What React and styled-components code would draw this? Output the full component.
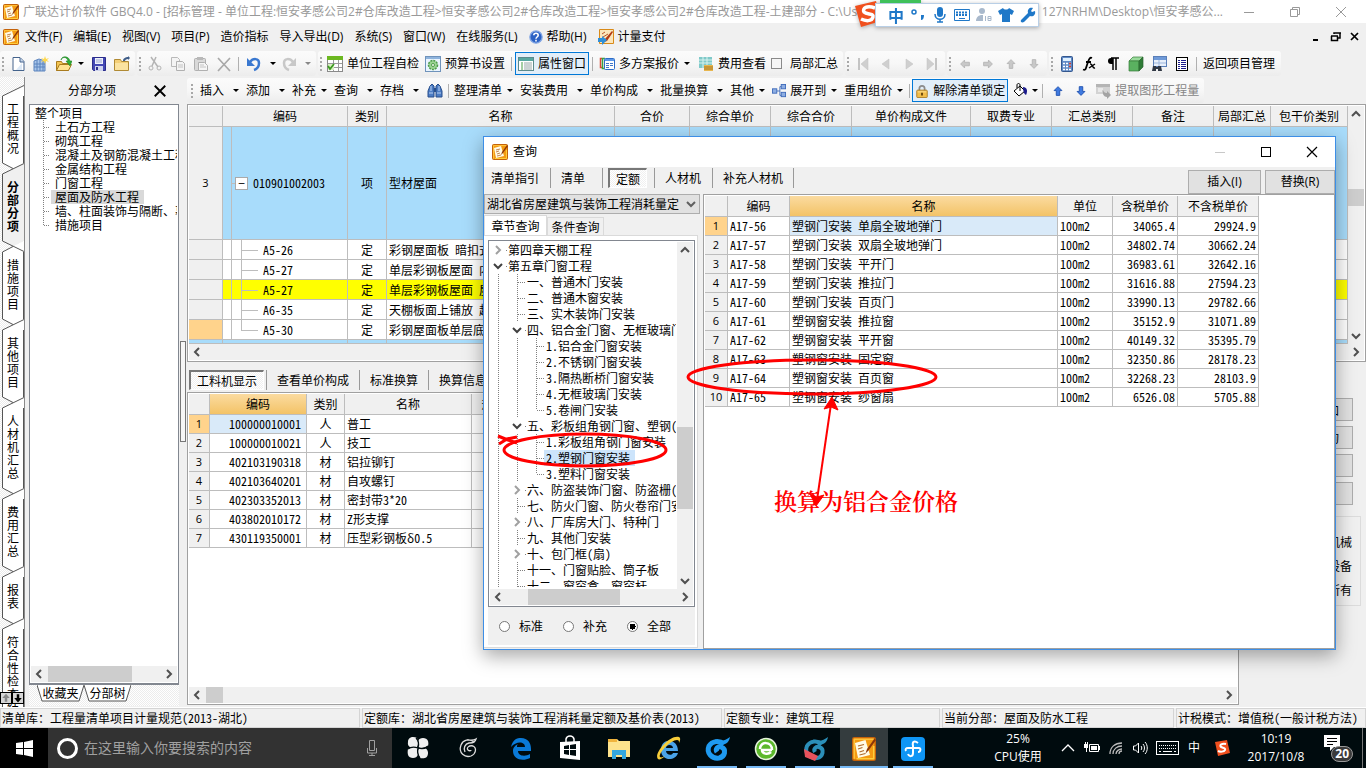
import React from 'react';
import styled, { createGlobalStyle, css } from 'styled-components';

const song = '"Noto Sans Mono CJK SC", "Noto Sans CJK SC", sans-serif';
const yahei = '"Open Sans", "Noto Sans CJK SC", sans-serif';
const line = '#bdbdbd';
const face = '#f0f0f0';

const GlobalStyle = createGlobalStyle`
    * { box-sizing: border-box; }
    body { margin: 0; background: ${face}; color: #000; font: 12px/16px ${song}; overflow: hidden; }
    button, input, select { font: inherit; color: inherit; margin: 0; padding: 0; border: 0; background: none; }
    svg { display: block; flex: none; }
    table { border-collapse: separate; border-spacing: 0; table-layout: fixed; }
`;

/* ---------- icons ---------- */

const Icon = ({ size = 16, h, box, children, ...rest }) => (
    <svg width={size} height={h || size} viewBox={box || '0 0 16 16'} fill="none" {...rest}>{children}</svg>
);

const AppIcon = ({ size = 16 }) => (
    <Icon size={size}>
        <rect x=".5" y=".5" width="15" height="15" rx="1" fill="#f39a12" stroke="#c4620a" />
        <path d="M1.500 14.500v-13h13" stroke="#ffc23a" />
        <path d="M2 4l7-2 3 10-8 2z" fill="#fffbe8" />
        <path d="M4 6l4-1M4 8l3-1M5 10l3-1M5 12l4-1" stroke="#b06a2c" strokeWidth=".8" />
        <path d="M15 1L10 8l-1 3 2-2 5-7z" fill="#8c3608" />
        <path d="M3 14.500h11.500V6" stroke="#ffce3a" />
    </Icon>
);

const NewIcon = () => (
    <Icon>
        <path d="M3 1.500h7l4 4v9h-11z" fill="#fff" stroke="#44638c" />
        <path d="M10 2v4h4" fill="#c7d8ee" stroke="#44638c" />
        <path d="M12 7v7H6z" fill="#dce8f6" />
    </Icon>
);

const BuildingIcon = () => (
    <Icon>
        <path d="M1 5l5-2 6 2v10H1z" fill="#a9c6ea" stroke="#5b83bd" />
        <path d="M4 4v11M7 4v11M10 5v10M1 8h11M1 11h11" stroke="#5b83bd" />
        <path d="M12 0l1 3 3-1-2 2 2 2-3-1-1 3-1-3-3 1 2-2-2-2 3 1z" fill="#ffd84a" />
    </Icon>
);

const OpenIcon = () => (
    <Icon>
        <path d="M.5 14.500v-9h5l1 2h6v7z" fill="#f3c451" stroke="#a97b1e" />
        <path d="M.5 14.500l3-6h12l-3 6z" fill="#ffe391" stroke="#a97b1e" />
        <path d="M5 4c2-4 6-3 7 1h-2l4 5 2-5h-2C13 0 6-1 5 4z" fill="#2fae35" stroke="#167a1c" strokeWidth=".5" />
    </Icon>
);

const SaveIcon = () => (
    <Icon>
        <path d="M1.500 1.500h13v13h-12l-1-1z" fill="#4448b4" stroke="#2b2d8c" />
        <rect x="4" y="2" width="8" height="6" fill="#eef1fb" />
        <path d="M5 4h6M5 6h6" stroke="#9aa4cf" />
        <rect x="4" y="10" width="8" height="5" fill="#cfd4ee" />
        <rect x="5" y="11" width="2" height="3" fill="#2b2d8c" />
    </Icon>
);

const FolderIcon = () => (
    <Icon>
        <path d="M.5 3.500h6l1 2h7v9H.5z" fill="#f4d078" stroke="#b08a34" />
        <path d="M1 7h13v7H1z" fill="#fbe3a0" />
        <path d="M9 5c0-3 3-4 5-4V0l2 2-2 2V3c-2 0-3 1-3 2z" fill="#3f5d87" />
    </Icon>
);

const CutIcon = () => (
    <Icon><path d="M4 1l7 10M9 1L5 10" stroke="#b4b4b4" strokeWidth="1.500" /><circle cx="4" cy="12" r="2" stroke="#b4b4b4" /><circle cx="12" cy="12" r="2" stroke="#b4b4b4" /></Icon>
);

const CopyIcon = () => (
    <Icon>
        <path d="M1.500 1.500h6l2 2v7h-8z" fill="#f4f4f4" stroke="#b9b9b9" />
        <path d="M6.500 5.500h6l2 2v7h-8z" fill="#f4f4f4" stroke="#b0b0b0" />
        <path d="M8 9h5M8 11h5" stroke="#c4c4c4" />
    </Icon>
);

const PasteIcon = () => (
    <Icon>
        <rect x="1.500" y="2.500" width="11" height="12" rx="1" fill="#d9d9d9" stroke="#b0b0b0" />
        <rect x="4" y="1" width="6" height="3" fill="#b9b9b9" />
        <path d="M5.500 6.500h6l3 3v5h-9z" fill="#f6f6f6" stroke="#b0b0b0" />
        <path d="M7 9h4M7 11h6" stroke="#c4c4c4" />
    </Icon>
);

const DeleteIcon = () => <Icon><path d="M2 2l12 13M14 2L2 15" stroke="#a9a9a9" strokeWidth="1.700" /></Icon>;

const UndoIcon = ({ color = '#3a78d0', flip }) => (
    <Icon>
        <g transform={flip ? 'translate(16 0) scale(-1 1)' : undefined}>
            <path d="M4 6c3-4 9-4 9 1 0 4-2 6-5 7" stroke={color} strokeWidth="2.500" />
            <path d="M1 2v8h8z" fill={color} />
        </g>
    </Icon>
);

const CheckTableIcon = () => (
    <Icon>
        <rect x=".5" y=".5" width="15" height="15" fill="#fff" stroke="#8a8a8a" />
        <path d="M0 0h16v4H0z" fill="#6cb821" />
        <path d="M1 7.500h14M1 11.500h14M6.500 4v11M11.500 4v11" stroke="#9a9a9a" />
        <path d="M1 8h6v6H1z" fill="#d7efc0" />
        <path d="M1 10l2 3 4-5" stroke="#3c9a20" strokeWidth="1.800" />
    </Icon>
);

const GearBoxIcon = () => (
    <Icon>
        <rect x=".5" y=".5" width="15" height="15" fill="#eaf4ff" stroke="#6f93bb" />
        <path d="M1 1h14v2H1z" fill="#8fb4dd" />
        <circle cx="8" cy="9" r="4.500" fill="#9ad493" stroke="#4d9b4b" strokeDasharray="2 1" strokeWidth="1.500" />
        <circle cx="8" cy="9" r="1.500" fill="#fff" stroke="#4d9b4b" />
    </Icon>
);

const ListWindowIcon = () => (
    <Icon>
        <rect x=".5" y="1.500" width="15" height="13" fill="#fff" stroke="#5c8a8c" />
        <path d="M1 2h14v3H1z" fill="#57a7a0" />
        <path d="M3 7h2M3 9h2M3 11h2M3 13h2" stroke="#4a9d47" />
        <path d="M6 7h8M6 9h8M6 11h8M6 13h8" stroke="#98a7a8" />
    </Icon>
);

const PlansIcon = () => (
    <Icon>
        <path d="M3 2.500H1.500v9H3" stroke="#d84a36" strokeWidth="1.500" />
        <path d="M6 2.500H3.500v10H6" stroke="#3aa144" strokeWidth="1.500" />
        <rect x="5.500" y="2.500" width="10" height="11" rx="1" fill="#fff" stroke="#2d6dc8" />
        <path d="M6 3h9v2H6z" fill="#5d98e8" />
        <path d="M7 7.500h3M11 7.500h3M7 9.500h3M11 9.500h3M7 11.500h3" stroke="#4077c8" />
    </Icon>
);

const FeeIcon = () => (
    <Icon>
        <rect x="1" y="1" width="13" height="11" fill="#7fc9c9" />
        <path d="M1 4h13M1 7h13M5 1v11M9 1v11" stroke="#d8f2ee" />
        <path d="M6 9h9v6H6z" fill="#e8b750" />
        <path d="M6 11h9M6 13h9" stroke="#a8761e" />
    </Icon>
);

const HelpIcon = () => (
    <Icon size={14}>
        <circle cx="8" cy="8" r="7" fill="#2c62c4" stroke="#7fa4e4" strokeWidth="1.500" />
        <path d="M5.500 6c0-3 5-3 5 0 0 2-2.500 2-2.500 4M8 11v2" stroke="#fff" strokeWidth="1.800" />
    </Icon>
);

const PayIcon = () => (
    <Icon>
        <path d="M1.500.5h14v14h-14z" fill="#fbe6bc" stroke="#d98a18" />
        <path d="M4 5l3-2M5 8l5-3" stroke="#b9562a" />
        <path d="M14 2l-7 8-1 3 3-1 6-9z" fill="#b23a14" />
        <path d="M0 9h4V7l5 4-5 5v-3H0z" fill="#2f8fd8" />
    </Icon>
);

const Triangle = ({ back, bar }) => (
    <Icon>
        <g transform={back ? 'translate(16 0) scale(-1 1)' : undefined}>
            <path d={bar ? 'M3 2l7 6-7 6z' : 'M5 3l7 5-7 5z'} fill="#cfcfcf" stroke="#c0c0c0" strokeWidth=".5" />
            {bar && <path d="M12 2v12" stroke="#c4c4c4" strokeWidth="2" />}
        </g>
    </Icon>
);

const Arrow = ({ turn = 0, fill = '#c8c8c8', stroke = '#b4b4b4' }) => (
    <Icon size={14}>
        <path d="M8 3l4.500 4.500h-2.500V13H6V7.500H3.500z" fill={fill} stroke={stroke} transform={`rotate(${turn} 8 8)`} />
    </Icon>
);

const CalcIcon = () => (
    <Icon>
        <rect x="2.500" y=".5" width="11" height="15" rx="1" fill="#5f8ac6" stroke="#34578e" />
        <rect x="4" y="2" width="8" height="3" fill="#dff0ff" />
        <path d="M4 7.500h8M4 10.500h8M4 13.500h8" stroke="#fff" strokeWidth="1.600" strokeDasharray="2 1" />
        <path d="M10 7.500h2M10 10.500h2" stroke="#d23c2c" strokeWidth="1.600" />
    </Icon>
);

const FxIcon = () => (
    <Icon>
        <path d="M10 2C8 1 7 3 6 6l-2 6c-.5 2-1.500 2-3 1.500M4 6h5" stroke="#000" strokeWidth="1.800" />
        <path d="M8 8c3-1 2 5 5 4M13 8l-6 4" stroke="#000" strokeWidth="1.500" />
    </Icon>
);

const ParaIcon = () => <Icon><path d="M8 2v12M11 2v12M6 2h8" stroke="#000" strokeWidth="1.500" /><path d="M8 2H6a3 3 0 000 6h2z" fill="#000" /></Icon>;

const CubeIcon = () => (
    <Icon>
        <path d="M1 5l4-4h10l-4 4z" fill="#9adb9c" stroke="#377d3b" strokeWidth=".7" />
        <path d="M1 5h10v10H1z" fill="#5ab160" stroke="#377d3b" strokeWidth=".7" />
        <path d="M11 5l4-4v10l-4 4z" fill="#2f7c37" stroke="#2b6430" strokeWidth=".7" />
    </Icon>
);

const FindTableIcon = () => (
    <Icon>
        <rect x="2.500" y=".5" width="13" height="10" fill="#e8f0fb" stroke="#5a7fb8" />
        <path d="M3 1h12v3H3z" fill="#6f9ad8" />
        <path d="M3 7h12M8 4v6" stroke="#9db6dc" />
        <path d="M1 15l1-5h3v5zM7 15v-5h3l1 5zM5 11h2v2H5z" fill="#303844" />
    </Icon>
);

const SheetIcon = () => (
    <Icon>
        <rect x="2.500" y="1.500" width="11" height="13" fill="#fff" stroke="#000" />
        <path d="M4 4.500h2M4 6.500h2M4 8.500h2M4 10.500h2M4 12.500h2M7 4.500h5M7 6.500h5M7 8.500h5M7 10.500h5M7 12.500h5" stroke="#1b1b8c" />
    </Icon>
);

const BinocularsIcon = () => (
    <Icon>
        <path d="M3 3l2-2 2 2v11H1V8zM9 3l2-2 2 2 2 5v6H9z" fill="#4c7cc4" stroke="#284f8c" />
        <path d="M7 5h2v4H7z" fill="#284f8c" />
        <path d="M2 10h4M10 10h4M4 3v5M12 3v5" stroke="#b8d0f2" />
    </Icon>
);

const ExpandIcon = () => (
    <Icon size={14}>
        <path d="M5 8h4M9 3v10M9 3h2M9 13h2" stroke="#3a67b8" />
        <rect x=".5" y="5.500" width="5" height="5" fill="#8eaee2" stroke="#3a67b8" />
        <rect x="10.500" y=".5" width="5" height="5" fill="#8eaee2" stroke="#3a67b8" />
        <rect x="10.500" y="9.500" width="5" height="5" fill="#8eaee2" stroke="#3a67b8" />
    </Icon>
);

const LockIcon = () => (
    <Icon size={14}>
        <path d="M5 8V5a3 3 0 016 0v3" stroke="#8c8c8c" strokeWidth="2" />
        <rect x="2" y="7" width="12" height="8.500" rx="1" fill="#f2bd4a" stroke="#a87820" />
        <path d="M3 9h10" stroke="#ffe39a" />
        <path d="M8 10v3" stroke="#5c3c08" strokeWidth="2" />
    </Icon>
);

const BucketIcon = () => (
    <Icon>
        <path d="M2 8l6-5 5 5-6 5z" fill="#fff" stroke="#000" />
        <path d="M8 8V2c0-2-3-2-3 0v3" stroke="#000" />
        <path d="M11 4c4 0 5 4 3 8-2-1-3-4-3-8z" fill="#1b1b8c" />
    </Icon>
);

const ExtractIcon = () => (
    <Icon>
        <path d="M1 1h14v10H1z" fill="#d3d3d3" />
        <path d="M1 1h14v3H1z" fill="#b5b5b5" />
        <path d="M3 6h5M3 8h4" stroke="#fff" />
        <path d="M8 7c1 3 3 3 4 3V8l4 4-4 4v-2c-3 0-5-3-4-7z" fill="#a4a4a4" />
    </Icon>
);

const Chevron = ({ turn = 0, color = '#505050' }) => (
    <Icon>
        <path d="M4 6l4 4 4-4" stroke={color} strokeWidth="2" transform={`rotate(${turn} 8 8)`} />
    </Icon>
);

/* dotted connectors drawn in front of each tree entry */
const Connector = ({ kind, w = 19, h = 16 }) => (
    <svg width={w} height={h} shapeRendering="crispEdges">
        <g stroke="#808080" strokeDasharray="1 1" strokeWidth="1">
            {(kind === 'pass' || kind === 'tee') && <path d={`M8.500 0V${h}`} />}
            {kind === 'end' && <path d={`M8.500 0V${h / 2}`} />}
            {(kind === 'tee' || kind === 'end') && <path d={`M9 ${h / 2 + 0.5}H${w - 2}`} />}
        </g>
        {kind === 'open' && <path d="M4 6l4 4 4-4" fill="none" stroke="#404040" strokeWidth="2" shapeRendering="auto" />}
        {kind === 'closed' && <path d="M6 4l4 4-4 4" fill="none" stroke="#a0a0a0" strokeWidth="2" shapeRendering="auto" />}
        {(kind === 'open' || kind === 'closed') && <rect x={w - 3} y="8" width="1" height="1" fill="#808080" />}
    </svg>
);

/* ---------- window frame ---------- */

const Screen = styled.div`
    display: flex;
    flex-direction: column;
    height: 100vh;
    position: relative;
    overflow: hidden;
`;

const TitleBar = styled.header`
    display: flex;
    align-items: center;
    height: 23px;
    padding: 0 17px 0 3px;
    background: #fff;
    color: #999;
    font-family: ${yahei};
    white-space: nowrap;

    h1 {
        flex: 1;
        margin: 0 0 0 4px;
        font-size: 12px;
        font-weight: 400;
    }
`;

const PathEnd = styled.span`
    margin-right: 18px;
`;

const FrameButtons = styled.div`
    display: flex;
    gap: ${({ $gap }) => $gap}px;

    button { display: flex; }
`;

const MenuBar = styled.nav`
    display: flex;
    align-items: center;
    height: 27px;
    padding: 0 3px;
    font-family: ${yahei};
`;

const MenuItem = styled.button`
    display: flex;
    align-items: center;
    gap: 4px;
    padding: 0 6px 0 5px;
    white-space: nowrap;
`;

const Spacer = styled.div`
    flex: 1;
`;

const ToolbarRow = styled.div`
    display: flex;
    gap: 2px;
    height: 27px;
    padding-top: 1px;
    font-family: ${yahei};
`;

const Group = styled.div`
    display: flex;
    align-items: center;
    height: 25px;
    padding-right: ${({ $end = 2 }) => $end}px;
    border-radius: 3px;
    background: linear-gradient(#fbfbfb, #f7f7f7 50%, #ececec);
`;

const Grip = styled.i`
    width: 2px;
    height: 14px;
    margin: 0 2px;
    background: repeating-linear-gradient(#a8a8a8 0 2px, transparent 2px 4px);
`;

const Sep = styled.i`
    width: 1px;
    height: 14px;
    margin: 0 ${({ $tight }) => $tight ? 2 : 3}px;
    background: #b0b0b0;
`;

const ToolIcon = styled.button`
    display: flex;
    justify-content: center;
    width: 23px;
`;

const ToolButton = styled.button`
    display: flex;
    align-items: center;
    gap: 4px;
    height: 23px;
    padding: 0 2px;
    border: 1px solid transparent;
    white-space: nowrap;
    color: ${({ disabled }) => disabled ? '#858585' : '#000'};
    ${({ $active }) => $active && css`
        background: #e2eef9;
        border-color: #0078d7;
    `}
`;

const Caret = styled.i`
    width: 6px;
    margin: 0 1px 0 ${({ $wide }) => $wide ? 5 : 1}px;
    border: 3px solid transparent;
    border-top-color: ${({ $dim }) => $dim ? '#888' : '#000'};
    border-bottom: 0;
`;

const CheckLabel = styled.label`
    display: flex;
    align-items: center;
    gap: 8px;
    margin: 0 3px 0 2px;
    white-space: nowrap;

    input {
        appearance: none;
        width: 11px;
        height: 11px;
        border: 1px solid #8a8a8a;
        background: #f6f6f6;
    }
`;

/* ---------- workspace ---------- */

const Workspace = styled.div`
    flex: 1;
    display: flex;
    min-height: 0;
`;

const SideTabs = styled.nav`
    display: flex;
    flex-direction: column;
    width: 25px;
    padding: 8px 0 0 2px;
    border-right: 1px solid #8a8a8a;
    background: repeating-conic-gradient(#fff 0 25%, #ececec 0 50%) 0 0 / 2px 2px;
    overflow: hidden;
`;

const SideTab = styled.button`
    flex: none;
    width: 22px;
    padding: 6px 0 9px;
    border: solid #555;
    border-width: 0 1px 0 1px;
    background: ${({ $active }) => $active ? face : '#fff'};
    border-right-color: ${({ $active }) => $active ? face : '#555'};
    font-weight: ${({ $active }) => $active ? 700 : 400};
    line-height: 13px;

    span {
        display: block;
        width: 12px;
        margin: 0 auto;
        word-break: break-all;
    }
`;

const Joint = ({ first, above, below }) => (
    <svg width="22" height="11">
        {!first && <path d="M0 0H22L11 5.500z" fill={above ? face : '#fff'} />}
        <path d="M0 11H22V0L11 5.500z" fill={below ? face : '#fff'} />
        <path d={first ? 'M.5 11L22 .5' : above ? 'M.5 0L22 10.500M.5 11L11 5.500' : 'M.5 11L22 .5M.5 0L11 5.500'} stroke="#555" fill="none" />
    </svg>
);

const SideArrows = styled.div`
    display: flex;
    position: absolute;
    left: 0;
    bottom: 64px;

    button {
        display: flex;
        width: 12px;
        height: 12px;
        border: 1px solid #000;
        background: #d6d6d6;
    }
`;

const Outline = styled.aside`
    display: flex;
    flex-direction: column;
    width: 150px;
    margin: 0 0 1px 4px;
`;

const OutlineHead = styled.div`
    display: flex;
    align-items: center;
    justify-content: space-between;
    height: 27px;
    padding: 0 8px 0 39px;
    font-family: ${yahei};
`;

const OutlineBox = styled.div`
    flex: 1;
    display: flex;
    flex-direction: column;
    min-height: 0;
    padding: 1px;
    border: 1px solid #828790;
    border-bottom-width: 2px;
    background: #fff;
`;

const OutlineTree = styled.ul`
    flex: 1;
    margin: 0;
    padding: 0 0 0 4px;
    list-style: none;
    overflow: hidden;
    line-height: 14px;
`;

const OutlineItem = styled.li`
    display: flex;
    height: 14px;
    white-space: nowrap;

    span {
        padding: 0 5px 0 4px;
        margin-left: -1px;
        background: ${({ $active }) => $active ? '#d9d9d9' : 'none'};
    }
`;

const BottomTabs = styled.div`
    display: flex;
    height: 21px;
    padding-left: 8px;
    background: repeating-conic-gradient(#fff 0 25%, #ececec 0 50%) 0 0 / 2px 2px;

    button {
        display: grid;
        width: 47px;
        height: 17px;
        justify-items: center;
    }

    svg, span {
        grid-area: 1 / 1;
    }
`;

const Splitter = styled.div`
    display: flex;
    align-items: flex-end;
    width: 8px;
    padding: 264px 0 265px 1px;

    i {
        width: 6px;
        height: 100%;
        border: 1px solid #777;
        background: #f6f6f6;
    }
`;

const Main = styled.main`
    flex: 1;
    display: flex;
    flex-direction: column;
    min-width: 0;
`;

const Box = styled.section`
    display: flex;
    flex-direction: column;
    min-width: 0;
    min-height: 0;
    padding: 1px;
    border: 1px solid #a0a0a0;
    background: #fff;
    ${({ $grow }) => $grow && css`flex: 1;`}
`;

const Row = styled.div`
    display: flex;
    min-height: 0;
    ${({ $grow }) => $grow && css`flex: 1;`}
`;

const TableArea = styled.div`
    flex: 1;
    min-height: 0;
    overflow: hidden;
`;

const Track = styled.div`
    display: flex;
    flex: none;
    flex-direction: ${({ $vertical }) => $vertical ? 'column' : 'row'};
    ${({ $vertical }) => $vertical ? 'width: 16px;' : 'height: 16px;'}
    background: ${face};

    button { display: flex; flex: none; }
`;

const Thumb = styled.i`
    flex: 0 0 ${({ $size }) => $size}px;
    background: #cdcdcd;
`;

const Gap = styled.i`
    flex: ${({ $size }) => $size ? `0 0 ${$size}px` : '1'};
`;

const ScrollBar = ({ vertical, before, thumb }) => (
    <Track $vertical={vertical}>
        <button aria-label="向前滚动"><Chevron turn={vertical ? 180 : 90} /></button>
        {before > 0 && <Gap $size={before} />}
        {thumb > 0 && <Thumb $size={thumb} />}
        <Gap />
        <button aria-label="向后滚动"><Chevron turn={vertical ? 0 : -90} /></button>
    </Track>
);

const Table = styled.table`
    width: ${({ $full }) => $full ? '100%' : '1px'};

    th, td {
        height: ${({ $row }) => $row}px;
        padding: 0 2px;
        border: solid ${line};
        border-width: 0 1px 1px 0;
        font-weight: 400;
        line-height: 16px;
        white-space: nowrap;
        overflow: hidden;
    }

    thead th {
        height: 21px;
        padding: 0;
        background: ${face};
    }

    tbody th {
        padding: 0;
        background: ${face};
        font-family: "Open Sans", sans-serif;
        font-size: 11px;
    }
`;

const Th = styled.th`
    && {
        ${({ $active }) => $active && css`background: linear-gradient(#fbdba0, #f3c367);`}
    }
`;

const RowHead = styled.th`
    && {
        ${({ $active }) => $active && css`background: #ffd38c;`}
    }
`;

const Td = styled.td`
    text-align: ${({ $align = 'left' }) => $align};
    background: ${({ $active }) => $active ? '#d9eaf9' : 'transparent'};
`;

const CodeCell = styled(Td)`
    && { padding-right: 5px; }
`;

const BillRow = styled.tr`
    background: ${({ $tone }) => $tone || '#fff'};

    && > * { height: ${({ $h = 20 }) => $h}px; }
    && > .code { padding: 0; }
`;

const Code = styled.div`
    display: flex;
    align-items: center;
    height: ${({ $h = 19 }) => $h}px;
`;

const Fold = styled.button`
    width: 13px;
    height: 13px;
    margin-right: 5px;
    border: 1px solid #aaa;
    background: #fff;
    line-height: 10px;
`;

const BillLines = ({ last }) => (
    <svg width="40" height="19" stroke={line} shapeRendering="crispEdges">
        <path d={`M8.500 0V20M18.500 0V${last ? 10 : 20}M18 10.500H35`} />
    </svg>
);

const TabStrip = styled.div`
    display: flex;
    align-items: center;
    ${({ $inset }) => $inset ? 'padding: 8px 0 2px 2px;' : 'height: 21px;'}
`;

const Tab = styled.button`
    height: 20px;
    padding: ${({ $active }) => $active ? '1px 6px 0' : '0 10px'};
    white-space: nowrap;
    ${({ $flush }) => $flush && css`padding: 0;`}
    ${({ $active }) => $active && css`
        border: solid #fff;
        border-width: 2px 1px 1px 2px;
        border-top-color: #777;
        border-left-color: #777;
        background: repeating-conic-gradient(#fff 0 25%, ${face} 0 50%) 0 0 / 2px 2px;
    `}
`;

const TabSep = styled.i`
    width: 1px;
    height: 20px;
    background: #999;
    margin-left: ${({ $left = 0 }) => $left}px;
    margin-right: ${({ $right = 0 }) => $right}px;
`;

const Actions = styled.div`
    display: flex;
    flex-direction: column;
    align-items: flex-end;
    gap: 5px;
    width: 127px;
    padding: 6px 5px 0 0;
`;

const ActionButton = styled.button`
    width: 52px;
    height: 23px;
    margin-right: 8px;
    border: 1px solid #adadad;
    background: #e1e1e1;
`;

const OptionGroup = styled.fieldset`
    display: flex;
    flex-direction: column;
    gap: 8px;
    width: 90px;
    height: 90px;
    margin: 6px 0 0;
    padding: 17px 8px 0;
    border: 1px solid #dcdcdc;

    label {
        display: flex;
        justify-content: flex-end;
        align-items: center;
        gap: 4px;
    }
`;

const StatusBar = styled.footer`
    display: grid;
    grid-template-columns: 360fr 360fr 216fr 232fr 190fr;
    gap: 2px;
    height: 21px;
    border-top: 1px solid #fff;
    background: ${face};

    span {
        padding: 1px 1px;
        border: 1px solid #d4d4d4;
        white-space: nowrap;
        overflow: hidden;
    }
`;

/* ---------- query dialog ---------- */

const Dialog = styled.div`
    position: absolute;
    top: 136px;
    left: 483px;
    right: 30px;
    height: 514px;
    display: flex;
    flex-direction: column;
    border: 1px solid #3d8ee6;
    background: ${face};
    box-shadow: 0 6px 18px rgba(0, 0, 0, 0.35);
`;

const DialogTitle = styled.div`
    display: flex;
    align-items: center;
    gap: 5px;
    height: 30px;
    padding: 0 15px 0 8px;
    background: #fff;
    font-family: ${yahei};

    h2 {
        flex: 1;
        margin: 0;
        font-size: 12px;
        font-weight: 400;
    }
`;

const DialogTools = styled.div`
    display: flex;
    height: 27px;
`;

const PushButton = styled.button`
    width: ${({ $w }) => $w}px;
    height: 24px;
    margin: 3px 0 0 4px;
    border: 1px solid #adadad;
    background: #e1e1e1;
    font-family: "Open Sans", ${song};
`;

const DialogBody = styled.div`
    flex: 1;
    display: flex;
    gap: 3px;
    min-height: 0;
`;

const QueryPane = styled.div`
    display: flex;
    flex-direction: column;
    width: 216px;
`;

const Combo = styled.div`
    display: grid;
    align-items: center;
    justify-items: end;
    height: 20px;
    border: 1px solid #adadad;
    background: #e1e1e1;

    select {
        grid-area: 1 / 1;
        appearance: none;
        width: 100%;
        padding: 0 20px 0 2px;
    }

    svg {
        grid-area: 1 / 1;
        pointer-events: none;
    }
`;

const PageTabs = styled.div`
    display: flex;
    align-items: flex-end;
    height: 21px;
`;

const PageTab = styled.button`
    width: ${({ $active }) => $active ? 63 : 57}px;
    height: ${({ $active }) => $active ? 20 : 18}px;
    border: 1px solid #dadada;
    border-bottom: 0;
    background: ${({ $active }) => $active ? '#fff' : face};
`;

const Page = styled.div`
    flex: 1;
    display: flex;
    flex-direction: column;
    min-height: 0;
    margin: 0 2px 1px 0;
    padding: 4px 2px 2px 4px;
    border: 1px solid #dadada;
    border-left: 0;
    background: #fff;
`;

const TreeBox = styled.div`
    flex: 1;
    display: flex;
    flex-direction: column;
    min-height: 0;
    padding: 1px;
    border: 1px solid #828790;
`;

const Tree = styled.ul`
    flex: 1;
    min-width: 0;
    margin: 0 1px 2px 0;
    padding: 0;
    list-style: none;
    overflow: hidden;
`;

const TreeItem = styled.li`
    display: flex;
    height: 16px;
    white-space: nowrap;

    span {
        margin-left: -3px;
        padding: 0 5px 0 2px;
        background: ${({ $active }) => $active ? '#cce4fb' : 'none'};
    }
`;

const Scope = styled.div`
    display: flex;
    gap: 20px;
    height: 38px;
    padding-left: 11px;
    background: ${face};

    label {
        display: flex;
        align-items: center;
        gap: 9px;
    }

    input {
        appearance: none;
        width: 11px;
        height: 11px;
        border: 1px solid #777;
        border-radius: 50%;
        background: #fff;
    }

    input:checked {
        background: radial-gradient(#000 0 3px, #fff 3px);
    }
`;

/* ---------- review marks ---------- */

const Marks = styled.svg`
    position: absolute;
    top: 350px;
    left: 490px;
    pointer-events: none;
`;

const Note = styled.p`
    position: absolute;
    top: 484px;
    left: 774px;
    margin: 0;
    color: #f00;
    font: 600 23px/34px "Noto Serif CJK SC", "Noto Sans CJK SC", sans-serif;
    white-space: nowrap;
`;

/* ---------- input method bar ---------- */

const ImeBar = styled.div`
    position: absolute;
    top: 0;
    left: 854px;
    display: flex;
    align-items: flex-start;
    filter: drop-shadow(0 1px 2px rgba(0, 0, 0, 0.3));
`;

const ImePanel = styled.div`
    display: flex;
    align-items: center;
    gap: 6px;
    height: 24px;
    margin: 3px 0 0 -7px;
    padding: 0 2px 0 12px;
    border: 1px solid #b9cfe6;
    background: #fff;
    color: #1f78c8;
    font: 700 16px/20px "Noto Sans CJK SC", sans-serif;
`;

const GreenTab = styled.i`
    position: absolute;
    top: 0;
    left: 26px;
    width: 41px;
    height: 3px;
    background: #3fc05a;
`;

/* ---------- taskbar ---------- */

const Taskbar = styled.footer`
    display: flex;
    align-items: stretch;
    height: 40px;
    background: #000b0e;
    color: #fff;
    font-family: ${yahei};
`;

const StartButton = styled.button`
    display: flex;
    align-items: center;
    justify-content: center;
    width: 48px;
    background: #000;
`;

const Search = styled.label`
    display: flex;
    align-items: center;
    gap: 5px;
    width: 344px;
    margin-right: 2px;
    padding: 0 12px 0 8px;
    background: #323232;

    input {
        flex: 1;
        min-width: 0;
        font-size: 14px;
    }

    input::placeholder {
        color: #a0a0a0;
        opacity: 1;
    }
`;

const TaskButton = styled.button`
    display: flex;
    align-items: center;
    justify-content: center;
    width: 48px;
    margin-right: ${({ $gap = 1 }) => $gap}px;
    background: ${({ $active }) => $active ? '#343c3e' : 'none'};
    ${({ $running, $active }) => $running && css`
        border: solid transparent;
        border-width: 2px 4px 0;
        background: linear-gradient(#76b9f5, #76b9f5) ${$active ? 'border-box' : ''} bottom / ${$active ? '100%' : '40px'} 2px no-repeat ${$active ? ', #343c3e' : ''};
    `}
`;

const Tray = styled.div`
    flex: 1;
    display: flex;
    align-items: center;
    justify-content: flex-end;
    border-right: 1px solid #777;
    margin-right: 3px;
`;

const TrayButton = styled.button`
    display: flex;
    justify-content: center;
    width: ${({ $w = 24 }) => $w}px;
`;

const TwoLines = styled.div`
    width: ${({ $w }) => $w}px;
    margin: 0 ${({ $right }) => $right}px 0 0;
    line-height: 18px;
    text-align: center;
    white-space: pre-line;
`;

const Notice = styled.div`
    display: grid;
    width: 30px;
    height: 28px;
    margin-right: 9px;

    svg { grid-area: 1 / 1; }

    b {
        grid-area: 1 / 1;
        align-self: end;
        justify-self: end;
        padding: 0 3px;
        border: 1px solid #999;
        border-radius: 9px;
        background: #3a3a3a;
        font-size: 12px;
        line-height: 14px;
        font-weight: 700;
    }
`;

/* ---------- data ---------- */

const sideTabs = ['工程概况', '分部分项', '措施项目', '其他项目', '人材机汇总', '费用汇总', '报表', '符合性检查结果'];

const outline = ['土石方工程', '砌筑工程', '混凝土及钢筋混凝土工程', '金属结构工程', '门窗工程', '屋面及防水工程', '墙、柱面装饰与隔断、幕墙工程', '措施项目'];

const billColumns = [
    ['', 34], ['编码', 125], ['类别', 39], ['名称'], ['合价', 75], ['综合单价', 81], ['综合合价', 81], ['单价构成文件', 119],
    ['取费专业', 81], ['汇总类别', 81], ['备注', 81], ['局部汇总', 57], ['包干价类别', 77],
];

const billRows = [
    ['A5-26', '彩钢屋面板 暗扣式'],
    ['A5-27', '单层彩钢板屋面 内板'],
    ['A5-27', '单层彩钢板屋面 屋面板', '#ffff00'],
    ['A6-35', '天棚板面上铺放 超细棉'],
    ['A5-30', '彩钢屋面板单层底板'],
];

const resources = [
    ['100000010001', '人', '普工'],
    ['100000010021', '人', '技工'],
    ['402103190318', '材', '铝拉铆钉'],
    ['402103640201', '材', '自攻螺钉'],
    ['402303352013', '材', '密封带3*20'],
    ['403802010172', '材', 'Z形支撑'],
    ['430119350001', '材', '压型彩钢板δ0.5'],
];

const chapters = [
    [['closed'], '第四章天棚工程'],
    [['open'], '第五章门窗工程'],
    [['pass', 'tee'], '一、普通木门安装'],
    [['pass', 'tee'], '二、普通木窗安装'],
    [['pass', 'tee'], '三、实木装饰门安装'],
    [['pass', 'open'], '四、铝合金门窗、无框玻璃门安装'],
    [['pass', 'pass', 'tee'], '1.铝合金门窗安装'],
    [['pass', 'pass', 'tee'], '2.不锈钢门窗安装'],
    [['pass', 'pass', 'tee'], '3.隔热断桥门窗安装'],
    [['pass', 'pass', 'tee'], '4.无框玻璃门安装'],
    [['pass', 'pass', 'end'], '5.卷闸门安装'],
    [['pass', 'open'], '五、彩板组角钢门窗、塑钢(料)门窗'],
    [['pass', 'pass', 'tee'], '1.彩板组角钢门窗安装'],
    [['pass', 'pass', 'tee'], '2.塑钢门窗安装', true],
    [['pass', 'pass', 'end'], '3.塑料门窗安装'],
    [['pass', 'closed'], '六、防盗装饰门窗、防盗栅(网)'],
    [['pass', 'tee'], '七、防火门窗、防火卷帘门安装'],
    [['pass', 'closed'], '八、厂库房大门、特种门'],
    [['pass', 'tee'], '九、其他门安装'],
    [['pass', 'closed'], '十、包门框(扇)'],
    [['pass', 'tee'], '十一、门窗贴脸、筒子板'],
    [['pass', 'tee'], '十二、窗帘盒、窗帘杆'],
];

const quotas = [
    ['A17-56', '塑钢门安装 单扇全玻地弹门', '34065.4', '29924.9'],
    ['A17-57', '塑钢门安装 双扇全玻地弹门', '34802.74', '30662.24'],
    ['A17-58', '塑钢门安装 平开门', '36983.61', '32642.16'],
    ['A17-59', '塑钢门安装 推拉门', '31616.88', '27594.23'],
    ['A17-60', '塑钢门安装 百页门', '33990.13', '29782.66'],
    ['A17-61', '塑钢窗安装 推拉窗', '35152.9', '31071.89'],
    ['A17-62', '塑钢窗安装 平开窗', '40149.32', '35395.79'],
    ['A17-63', '塑钢窗安装 固定窗', '32350.86', '28178.23'],
    ['A17-64', '塑钢窗安装 百页窗', '32268.23', '28103.9'],
    ['A17-65', '塑钢窗安装 纱窗扇', '6526.08', '5705.88'],
];

/* ---------- parts ---------- */

const DropButton = ({ children, wide, icon }) => (
    <ToolButton>{icon}{children}<Caret $wide={wide} /></ToolButton>
);

const MainToolbar = () => (
    <ToolbarRow>
        <Group>
            <Grip />
            <ToolIcon aria-label="新建"><NewIcon /></ToolIcon>
            <ToolIcon aria-label="新建工程"><BuildingIcon /></ToolIcon>
            <ToolIcon aria-label="打开"><OpenIcon /></ToolIcon>
            <Gap $size={2} /><Caret /><Gap $size={2} />
            <ToolIcon aria-label="保存"><SaveIcon /></ToolIcon>
            <ToolIcon aria-label="目录"><FolderIcon /></ToolIcon>
        </Group>
        <Group $end={4}>
            <Grip />
            <ToolIcon disabled aria-label="剪切"><CutIcon /></ToolIcon>
            <ToolIcon disabled aria-label="复制"><CopyIcon /></ToolIcon>
            <ToolIcon disabled aria-label="粘贴"><PasteIcon /></ToolIcon>
            <ToolIcon disabled aria-label="删除"><DeleteIcon /></ToolIcon>
            <Sep />
            <ToolIcon aria-label="撤销"><UndoIcon /></ToolIcon>
            <Caret $wide />
            <ToolIcon disabled aria-label="恢复"><UndoIcon color="#c8c8c8" flip /></ToolIcon>
            <Caret $wide $dim />
        </Group>
        <Group>
            <Grip />
            <ToolButton><CheckTableIcon />单位工程自检</ToolButton>
            <ToolButton><GearBoxIcon />预算书设置</ToolButton>
            <Sep />
            <ToolButton $active><ListWindowIcon />属性窗口</ToolButton>
            <Sep />
            <DropButton icon={<PlansIcon />}>多方案报价</DropButton>
            <Gap $size={1} />
            <ToolButton><FeeIcon />费用查看</ToolButton>
            <CheckLabel><input type="checkbox" />局部汇总</CheckLabel>
        </Group>
        <Group $end={2}>
            <Grip />
            <ToolIcon disabled aria-label="第一个"><Triangle back bar /></ToolIcon>
            <ToolIcon disabled aria-label="上一个"><Triangle back /></ToolIcon>
            <ToolIcon disabled aria-label="下一个"><Triangle /></ToolIcon>
            <ToolIcon disabled aria-label="最后一个"><Triangle bar /></ToolIcon>
        </Group>
        <Group>
            <Grip />
            <ToolIcon disabled aria-label="左移"><Arrow turn={-90} /></ToolIcon>
            <ToolIcon disabled aria-label="右移"><Arrow turn={90} /></ToolIcon>
            <ToolIcon disabled aria-label="上移"><Arrow /></ToolIcon>
            <ToolIcon disabled aria-label="下移"><Arrow turn={180} /></ToolIcon>
        </Group>
        <Group $end={3}>
            <Grip />
            <ToolIcon aria-label="计算器"><CalcIcon /></ToolIcon>
            <ToolIcon aria-label="函数"><FxIcon /></ToolIcon>
            <ToolIcon aria-label="段落"><ParaIcon /></ToolIcon>
            <ToolIcon aria-label="图形"><CubeIcon /></ToolIcon>
            <ToolIcon aria-label="查找表"><FindTableIcon /></ToolIcon>
            <ToolIcon aria-label="清单"><SheetIcon /></ToolIcon>
            <Sep />
            <ToolButton>返回项目管理</ToolButton>
        </Group>
    </ToolbarRow>
);

const BillToolbar = () => (
    <ToolbarRow>
        <Group>
            <Gap $size={2} />
            <Grip />
            <Gap $size={2} />
            <DropButton wide>插入</DropButton>
            <DropButton wide>添加</DropButton>
            <DropButton>补充</DropButton>
            <DropButton wide>查询</DropButton>
            <DropButton wide>存档</DropButton>
            <ToolIcon aria-label="查找"><BinocularsIcon /></ToolIcon>
            <Sep $tight />
            <DropButton>整理清单</DropButton>
            <DropButton wide>安装费用</DropButton>
            <DropButton wide>单价构成</DropButton>
            <DropButton wide>批量换算</DropButton>
            <DropButton>其他</DropButton>
            <DropButton icon={<ExpandIcon />}>展开到</DropButton>
            <DropButton>重用组价</DropButton>
            <Sep $tight />
            <ToolButton $active><LockIcon />解除清单锁定</ToolButton>
            <ToolIcon aria-label="填充颜色"><BucketIcon /></ToolIcon>
            <Caret />
            <Sep />
            <ToolIcon aria-label="上移"><Arrow fill="#3f7ae0" stroke="#1d4fae" /></ToolIcon>
            <ToolIcon aria-label="下移"><Arrow turn={180} fill="#3f7ae0" stroke="#1d4fae" /></ToolIcon>
            <ToolButton disabled><ExtractIcon />提取图形工程量</ToolButton>
        </Group>
    </ToolbarRow>
);

const BillTable = () => (
    <Table $full $row={20}>
        <colgroup>
            {billColumns.map(([name, width]) => <col key={name} style={{ width }} />)}
        </colgroup>
        <thead>
            <tr>{billColumns.map(([name]) => <th key={name}>{name}</th>)}</tr>
        </thead>
        <tbody>
            <BillRow $h={113} $tone="#a8dcfb">
                <RowHead>3</RowHead>
                <Td className="code">
                    <Code $h={112}>
                        <svg width="9" height="112" stroke={line}><path d="M8.500 0V112" /></svg>
                        <svg width="3" height="1" stroke={line}><path d="M0 .5H3" /></svg>
                        <Fold aria-label="折叠">−</Fold>010901002003
                    </Code>
                </Td>
                <Td $align="center">项</Td>
                <Td>型材屋面</Td>
                {billColumns.slice(4).map(([name]) => <Td key={name} />)}
            </BillRow>
            {billRows.map(([code, name, tone], i) => (
                <BillRow key={i} $tone={tone}>
                    <RowHead $active={i === 4} />
                    <Td className="code"><Code><BillLines last={i === 4} />{code}</Code></Td>
                    <Td $align="center">定</Td>
                    <Td>{name}</Td>
                    {billColumns.slice(4).map(([col]) => <Td key={col} />)}
                </BillRow>
            ))}
            <BillRow $h={4} $tone="#a8dcfb">
                {billColumns.map(([name]) => <Td key={name} />)}
            </BillRow>
        </tbody>
    </Table>
);

const ResourceTable = () => (
    <Table $row={19}>
        <colgroup>
            {[21, 97, 38, 127, 80].map((width) => <col key={width} style={{ width }} />)}
        </colgroup>
        <thead>
            <tr><th /><Th $active>编码</Th><th>类别</th><th>名称</th><th>规格及型号</th></tr>
        </thead>
        <tbody>
            {resources.map(([code, kind, name], i) => (
                <tr key={code}>
                    <RowHead $active={i === 0}>{i + 1}</RowHead>
                    <CodeCell $align="right" $active={i === 0}>{code}</CodeCell>
                    <Td $align="center">{kind}</Td>
                    <Td>{name}</Td>
                    <Td />
                </tr>
            ))}
        </tbody>
    </Table>
);

const QuotaTable = () => (
    <Table $row={19}>
        <colgroup>
            {[23, 62, 268, 55, 65, 81].map((width) => <col key={width} style={{ width }} />)}
        </colgroup>
        <thead>
            <tr><th /><th>编码</th><Th $active>名称</Th><th>单位</th><th>含税单价</th><th>不含税单价</th></tr>
        </thead>
        <tbody>
            {quotas.map(([code, name, taxed, untaxed], i) => (
                <tr key={code}>
                    <RowHead $active={i === 0}>{i + 1}</RowHead>
                    <Td>{code}</Td>
                    <Td $active={i === 0}>{name}</Td>
                    <Td>100m2</Td>
                    <Td $align="right">{taxed}</Td>
                    <Td $align="right">{untaxed}</Td>
                </tr>
            ))}
        </tbody>
    </Table>
);

const QueryDialog = () => (
    <Dialog role="dialog" aria-label="查询">
        <DialogTitle>
            <AppIcon />
            <h2>查询</h2>
            <FrameButtons $gap={30}>
                <button aria-label="最小化"><Icon><path d="M3 8.500h10" stroke="#c8c8c8" /></Icon></button>
                <button aria-label="最大化"><Icon><rect x="3.500" y="3.500" width="9" height="9" stroke="#000" /></Icon></button>
                <button aria-label="关闭"><Icon><path d="M3 3l10 10M13 3L3 13" stroke="#000" strokeWidth="1.200" /></Icon></button>
            </FrameButtons>
        </DialogTitle>
        <DialogTools>
            <TabStrip>
                <Gap $size={7} />
                <Tab $flush>清单指引</Tab>
                <TabSep $left={11} />
                <Tab>清单</Tab>
                <TabSep $left={7} $right={5} />
                <Tab $active>定额</Tab>
                <TabSep $left={7} />
                <Tab>人材机</Tab>
                <TabSep $left={1} />
                <Tab>补充人材机</Tab>
                <TabSep />
            </TabStrip>
            <Spacer />
            <PushButton $w={73}>插入(I)</PushButton>
            <PushButton $w={70}>替换(R)</PushButton>
        </DialogTools>
        <DialogBody>
            <QueryPane>
                <Combo>
                    <select aria-label="定额库"><option>湖北省房屋建筑与装饰工程消耗量定额及基价表(2013)</option></select>
                    <Chevron color="#606060" />
                </Combo>
                <PageTabs>
                    <PageTab $active>章节查询</PageTab>
                    <PageTab>条件查询</PageTab>
                </PageTabs>
                <Page>
                    <TreeBox>
                        <Row $grow>
                            <Tree>
                                {chapters.map(([kinds, text, active]) => (
                                    <TreeItem key={text} $active={active}>
                                        {kinds.map((kind, i) => <Connector key={i} kind={kind} />)}
                                        <span>{text}</span>
                                    </TreeItem>
                                ))}
                            </Tree>
                            <ScrollBar vertical before={169} thumb={82} />
                        </Row>
                        <ScrollBar before={22} thumb={92} />
                    </TreeBox>
                    <Scope>
                        <label><input type="radio" name="scope" />标准</label>
                        <label><input type="radio" name="scope" />补充</label>
                        <label><input type="radio" name="scope" defaultChecked />全部</label>
                    </Scope>
                </Page>
            </QueryPane>
            <Box $grow><QuotaTable /></Box>
        </DialogBody>
    </Dialog>
);

const Swirl = ({ color, width = 4 }) => (
    <>
        <path d="M21 9C16 5 9 6 6 11c-3 7 3 13 10 12 6-1 8-9 2-11-3-1-6 2-4 5" stroke={color} strokeWidth={width} />
        <path d="M12 4c5 3 10 2 15-2-1 6-5 8-10 8z" fill={color} />
    </>
);

const TaskIcon = ({ children }) => <Icon size={28} box="0 0 28 28">{children}</Icon>;

const TaskbarRow = () => (
    <Taskbar>
        <StartButton aria-label="开始">
            <Icon size={17} box="0 0 17 17"><path d="M0 3l7-1v6H0zM8 2l9-2v8H8zM0 9h7v6l-7-1zM8 9h9v8l-9-2z" fill="#fff" /></Icon>
        </StartButton>
        <Search>
            <Icon size={23} box="0 0 23 23"><circle cx="11.500" cy="11.500" r="9" stroke="#fff" strokeWidth="3" /></Icon>
            <input placeholder="在这里输入你要搜索的内容" aria-label="搜索" />
            <Icon><path d="M5.500 .5h5v10h-5zM3.500 8v5h9V8M8 13v3M5 15.500h6" stroke="#a0a0a0" /></Icon>
        </Search>
        <TaskButton aria-label="应用">
            <TaskIcon>
                <g fill="#f0f0f0">
                    <path d="M13 13C8 15 3 13 4 8c0-5 5-6 9-4 1 3 1 6 0 9z" />
                    <path d="M14 13c-1-5 0-9 5-9s6 4 5 8c-3 2-7 2-10 1z" />
                    <path d="M15 14c5-1 9 0 9 5s-4 6-8 5c-2-3-2-7-1-10z" />
                    <path d="M14 14c1 5 0 10-5 10s-6-4-5-9c3-2 7-2 10-1z" />
                </g>
                <path d="M4 15c4-3 7-2 10-1s7 1 10-2M16 24c-3-4-3-7-2-10s1-7-2-10" stroke="#000b0e" strokeWidth="1.200" />
            </TaskIcon>
        </TaskButton>
        <TaskButton $gap={6} aria-label="广联达">
            <TaskIcon>
                <path d="M21 8c-5-4-11-2-13 3-3 8 4 13 10 11 5-2 6-8 2-10-4-1-7 2-5 4 1 1 3 1 3 0M12 18c-2-4 0-8 4-9 5 0 6-1 7-4-3 2-6 1-9 1" stroke="#ddd" strokeWidth="1.300" />
            </TaskIcon>
        </TaskButton>
        <TaskButton aria-label="Edge">
            <TaskIcon><path d="M4 13C6 5 10 4 14 4c7 0 10 5 10 11v2H11c0 5 7 6 12 3v4c-8 4-17 1-17-7 0-4 3-6 5-7-1 1-1 2-1 3h8c0-6-9-6-14 0z" fill="#0a7ad8" /></TaskIcon>
        </TaskButton>
        <TaskButton aria-label="商店">
            <TaskIcon>
                <path d="M10 9V5c1-4 7-4 8 0v3" stroke="#fff" strokeWidth="1.500" />
                <path d="M4 8l20-1v19l-20-2z" fill="#fff" />
                <path d="M8 12l5-1v4H8zM14 11l6-1v5h-6zM8 16h5v5l-5-1zM14 16h6v6l-6-1z" fill="#000b0e" />
            </TaskIcon>
        </TaskButton>
        <TaskButton aria-label="文件资源管理器">
            <TaskIcon>
                <path d="M3 5h9l2 2h11v16H3z" fill="#fde38c" /><path d="M3 5h9v3H3z" fill="#f0b43c" />
                <path d="M7 16h14v9h-4v-4h-6v4H7z" fill="#34a8e0" />
            </TaskIcon>
        </TaskButton>
        <TaskButton aria-label="Internet Explorer">
            <TaskIcon>
                <path d="M7 16c0-13 17-12 17 1H12c0 4 6 5 7 2h5c-3 9-17 8-17-3zm5-2h7c0-4-7-4-7 0z" fill="#4aa3e8" />
                <path d="M4 25C-1 20 16 0 25 3c2 1 1 4 0 6 0-2 0-3-2-3C16 6 4 20 6 23c1 1 3 0 5-1-3 3-6 4-7 3z" fill="#f7ce3a" />
            </TaskIcon>
        </TaskButton>
        <TaskButton $running aria-label="广联达云"><TaskIcon><Swirl color="#1e9af0" width={5} /></TaskIcon></TaskButton>
        <TaskButton $running aria-label="浏览器">
            <TaskIcon>
                <circle cx="14" cy="14" r="10.500" fill="#5cb82c" stroke="#e6f4dc" strokeWidth="1.500" />
                <path d="M20 15H10c0 4 6 5 9 2M8 14c0-8 12-8 12 1" stroke="#fff" strokeWidth="2.500" />
            </TaskIcon>
        </TaskButton>
        <TaskButton $running aria-label="广联达工具">
            <TaskIcon><Swirl color="#2b8fb8" /><path d="M3 14l14 7-3 5-10-4z" fill="#e8525c" /></TaskIcon>
        </TaskButton>
        <TaskButton $running $active aria-label="GBQ4.0"><AppIcon size={24} /></TaskButton>
        <TaskButton $running aria-label="组价">
            <TaskIcon>
                <rect x="2" y="2" width="24" height="24" rx="4" fill="#0f96f5" />
                <path d="M19 8c-4-3-6-1-5 3v7c0 4-4 4-5 1M7 16c-1-2 0-3 2-3h11c2 0 2 4-1 4" stroke="#fff" strokeWidth="2" />
            </TaskIcon>
        </TaskButton>
        <Tray>
            <TwoLines $w={50} $right={13}>{'25%\nCPU使用'}</TwoLines>
            <TrayButton aria-label="显示隐藏的图标"><Icon><path d="M2 11l6-6 6 6" stroke="#fff" strokeWidth="1.300" /></Icon></TrayButton>
            <TrayButton aria-label="电源"><Icon><path d="M5.500 4.500h9v7h-9z" stroke="#fff" /><path d="M7 6h6v4H7zM15 6h1v4h-1zM0 4h4v4H0zM1 2h1v2H1zM3 2h1v2H3zM2 8h1v4H2z" fill="#fff" /></Icon></TrayButton>
            <TrayButton aria-label="网络"><Icon><path d="M2 14C2 7 7 3 14 3M5 14c0-5 4-8 9-8M8 14c0-3 3-5 6-5M11 14c0-2 1-3 3-3" stroke="#bbb" strokeWidth="1.300" /></Icon></TrayButton>
            <TrayButton aria-label="音量"><Icon><path d="M1.500 6h2l3-3v10l-3-3h-2zM9 6c1 1 1 3 0 4M11 4c2 2 2 6 0 8M13 2c3 3 3 9 0 12" stroke="#fff" /></Icon></TrayButton>
            <TrayButton $w={30} aria-label="键盘"><Icon size={23} h={14} box="0 0 23 14"><rect x=".5" y=".5" width="22" height="13" stroke="#fff" /><path d="M3 4.500h17M3 7.500h17" stroke="#fff" strokeDasharray="1 1" /><path d="M3 10.500h2M7 10.500h9M18 10.500h2" stroke="#fff" /></Icon></TrayButton>
            <TrayButton>中</TrayButton>
            <TrayButton $w={32} aria-label="输入法"><Icon><path d="M1 2l12-2 3 13-12 3z" fill="#f0501e" /><path d="M12 4c-4-1-7 1-5 3 2 1 5 1 4 3s-5 2-7 1" stroke="#fff" strokeWidth="2" /></Icon></TrayButton>
            <TwoLines $w={76} $right={9}>{'10:19\n2017/10/8'}</TwoLines>
            <Notice>
                <Icon size={18} box="0 0 18 18"><path d="M1 1h16v12h-6l-4 4v-4H1z" fill="#fff" /><path d="M4 4.500h10M4 7.500h10M4 10.500h6" stroke="#000" /></Icon>
                <b>20</b>
            </Notice>
        </Tray>
    </Taskbar>
);

const Ime = () => (
    <ImeBar>
        <GreenTab />
        <Icon size={28} box="0 0 28 28">
            <path d="M1 6L22 1l5 20-20 6z" fill="#f0501e" />
            <path d="M21 8C13 5 8 8 10 12c3 3 10 1 9 5-1 5-8 4-12 2" stroke="#fff" strokeWidth="3.500" />
        </Icon>
        <ImePanel>
            <span>中</span>
            <Icon><circle cx="4" cy="5" r="2" stroke="#1f78c8" strokeWidth="1.500" /><path d="M11 8h3c0 3-1 5-3 5z" fill="#1f78c8" /></Icon>
            <Icon><rect x="5" y="0" width="6" height="10" rx="3" fill="#1f78c8" /><path d="M3 7c0 7 10 7 10 0M8 12v3M5 15h6" stroke="#1f78c8" strokeWidth="1.500" /></Icon>
            <Icon><path d="M.5 2.500h15v11H.5z" stroke="#1f78c8" /><path d="M2 5.500h12M2 8h12" stroke="#1f78c8" strokeWidth="2" strokeDasharray="2 1" /><path d="M5 11.500h6" stroke="#1f78c8" /></Icon>
            <Icon><circle cx="6" cy="4" r="3" fill="#a9b9cc" /><path d="M0 14c0-8 12-8 12 0z" fill="#a9b9cc" /><path d="M7 8h9v7H7z" fill="#fff" /><path d="M9.500 9v5M12 9.500h3v4h-3zM12 11.500h3" stroke="#a9b9cc" /></Icon>
            <Icon><path d="M0 4l5-3c1 2 5 2 6 0l5 3-2 4-2-1v8H4V7L2 8z" fill="#1f78c8" /></Icon>
            <Icon><path d="M1 13l7-7c-1-4 2-6 5-5l-2 3 1 1 3-1c1 4-2 6-5 5l-6 6c-2 1-4 0-3-2z" fill="#1f78c8" /></Icon>
        </ImePanel>
    </ImeBar>
);

const App = () => (
    <>
        <GlobalStyle />
        <Screen>
            <TitleBar>
                <AppIcon />
                <h1>广联达计价软件 GBQ4.0 - [招标管理 - 单位工程:恒安孝感公司2#仓库改造工程&gt;恒安孝感公司2#仓库改造工程&gt;恒安孝感公司2#仓库改造工程-土建部分 - C:\Users</h1>
                <PathEnd>127NRHM\Desktop\恒安孝感公...</PathEnd>
                <FrameButtons $gap={30}>
                    <button aria-label="最小化"><Icon><path d="M3 8.500h10" stroke="#999" /></Icon></button>
                    <button aria-label="还原"><Icon><path d="M3.500 5.500h7v7h-7zM5.500 5V3.500h7v7H11" stroke="#999" /></Icon></button>
                    <button aria-label="关闭"><Icon><path d="M3 3l10 10M13 3L3 13" stroke="#999" /></Icon></button>
                </FrameButtons>
            </TitleBar>
            <MenuBar>
                <AppIcon />
                <Gap $size={1} />
                {['文件(F)', '编辑(E)', '视图(V)', '项目(P)', '造价指标', '导入导出(D)', '系统(S)', '窗口(W)', '在线服务(L)'].map((name) => (
                    <MenuItem key={name}>{name}</MenuItem>
                ))}
                <MenuItem><HelpIcon />帮助(H)</MenuItem>
                <MenuItem><PayIcon />计量支付</MenuItem>
                <Spacer />
                <FrameButtons $gap={3}>
                    <button aria-label="最小化子窗口"><Icon><path d="M4 11h5" stroke="#000" strokeWidth="2" /></Icon></button>
                    <button aria-label="还原子窗口"><Icon><path d="M3.500 7v4.500h6V7M3 7h7M6 5V4h6v5h-2M6 4h7" stroke="#000" strokeWidth="1.500" /></Icon></button>
                    <button aria-label="关闭子窗口"><Icon><path d="M4 4l7 7M11 4l-7 7" stroke="#000" strokeWidth="1.700" /></Icon></button>
                </FrameButtons>
            </MenuBar>
            <MainToolbar />
            <Workspace>
                <SideTabs>
                    {sideTabs.map((name, i) => (
                        <React.Fragment key={name}>
                            <Joint first={i === 0} above={i === 2} below={i === 1} />
                            <SideTab $active={i === 1}><span>{name}</span></SideTab>
                        </React.Fragment>
                    ))}
                </SideTabs>
                <Outline>
                    <OutlineHead>
                        分部分项
                        <ToolIcon aria-label="关闭"><Icon size={12}><path d="M1 1l14 14M15 1L1 15" stroke="#000" strokeWidth="2.500" /></Icon></ToolIcon>
                    </OutlineHead>
                    <OutlineBox>
                        <OutlineTree>
                            <OutlineItem>整个项目</OutlineItem>
                            {outline.map((name, i) => (
                                <OutlineItem key={name} $active={i === 5}>
                                    <Connector kind={i === 7 ? 'end' : 'tee'} w={17} h={14} />
                                    <span>{name}</span>
                                </OutlineItem>
                            ))}
                        </OutlineTree>
                        <ScrollBar before={1} thumb={84} />
                    </OutlineBox>
                    <BottomTabs>
                        {['收藏夹', '分部树'].map((name) => (
                            <button key={name}>
                                <svg width="47" height="17"><path d="M0 0l5 16h37l5-16" fill="#fff" stroke="#555" /></svg>
                                <span>{name}</span>
                            </button>
                        ))}
                    </BottomTabs>
                </Outline>
                <Splitter><i /></Splitter>
                <Main>
                    <BillToolbar />
                    <Box>
                        <Row>
                            <BillTable />
                            <ScrollBar vertical before={67} thumb={17} />
                        </Row>
                        <ScrollBar />
                    </Box>
                    <TabStrip $inset>
                        <Tab $active>工料机显示</Tab>
                        <TabSep $left={2} />
                        <Tab>查看单价构成</Tab>
                        <TabSep />
                        <Tab>标准换算</Tab>
                        <TabSep />
                        <Tab>换算信息</Tab>
                    </TabStrip>
                    <Row $grow>
                        <Box $grow>
                            <TableArea><ResourceTable /></TableArea>
                            <ScrollBar before={1} thumb={17} />
                        </Box>
                        <Actions>
                            <ActionButton>添加</ActionButton>
                            <ActionButton>查询</ActionButton>
                            <ActionButton aria-label="上移" />
                            <ActionButton aria-label="下移" />
                            <OptionGroup>
                                <label><input type="checkbox" />机械</label>
                                <label><input type="checkbox" />设备</label>
                                <label><input type="checkbox" />所有</label>
                            </OptionGroup>
                        </Actions>
                    </Row>
                    <Gap $size={2} />
                </Main>
                <SideArrows>
                    <button aria-label="向上"><Icon size={10}><path d="M8 1l6 7h-4v6H6V8H2z" fill="#888" /></Icon></button>
                    <button aria-label="向下"><Icon size={10}><path d="M8 15l6-7h-4V2H6v6H2z" fill="#000" /></Icon></button>
                </SideArrows>
            </Workspace>
            <StatusBar>
                <span>清单库：工程量清单项目计量规范(2013-湖北)</span>
                <span>定额库：湖北省房屋建筑与装饰工程消耗量定额及基价表(2013)</span>
                <span>定额专业：建筑工程</span>
                <span>当前分部：屋面及防水工程</span>
                <span>计税模式：增值税(一般计税方法)</span>
            </StatusBar>
            <TaskbarRow />
            <QueryDialog />
            <Marks width="460" height="160" fill="none" stroke="#f00" strokeWidth="3">
                <ellipse cx="322" cy="27" rx="124" ry="17" />
                <ellipse cx="95" cy="100" rx="81" ry="16" />
                <path d="M8 86l10 4 9 3M9 94l8-5 10-2" />
                <path d="M327 150L341 54" strokeWidth="2" />
                <path d="M342 47l6 13-7-3-7 2zM326 156l-6-12 7 3 7-2z" fill="#f00" strokeWidth="1" />
            </Marks>
            <Note>换算为铝合金价格</Note>
            <Ime />
        </Screen>
    </>
);

export default App;
